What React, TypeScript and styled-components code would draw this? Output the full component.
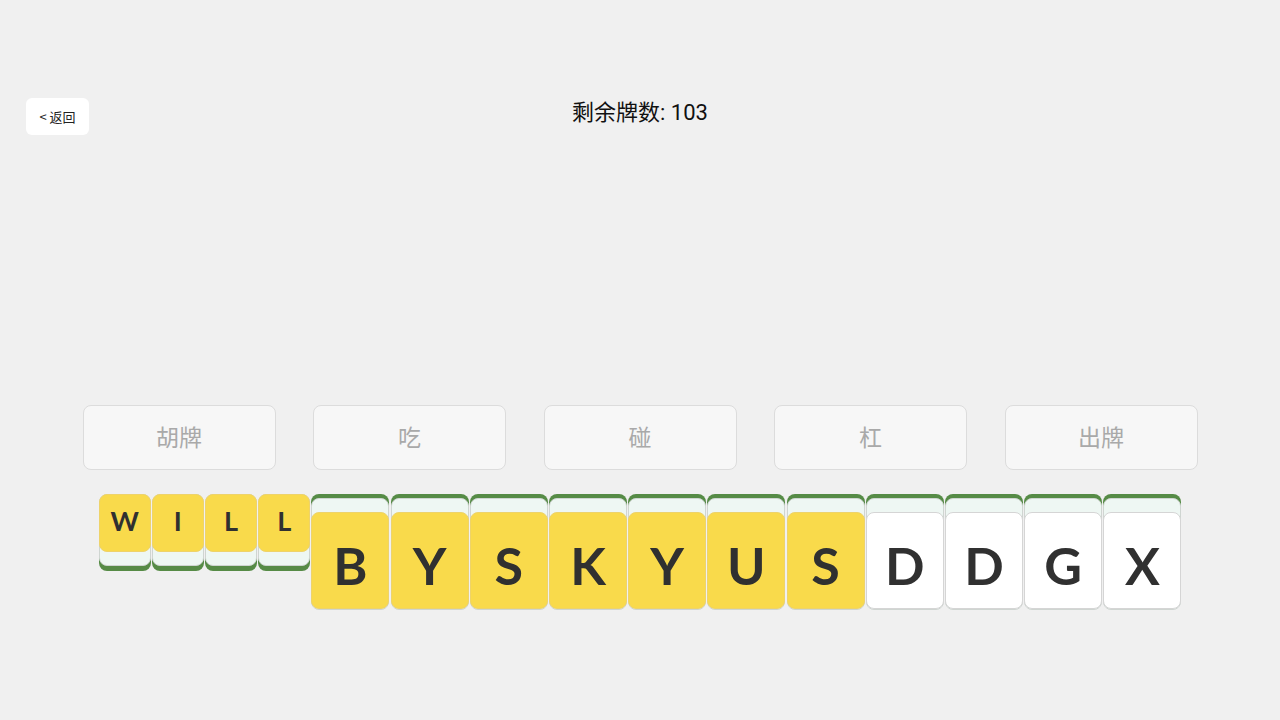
import React from "react";
import styled, { createGlobalStyle } from "styled-components";

const GlobalStyle = createGlobalStyle`
  html, body {
    margin: 0;
    padding: 0;
    background: #f0f0f0;
    font-family: "Noto Sans CJK SC", "Noto Sans", sans-serif;
  }
`;

type TileSize = "big" | "small";
type TileColor = "yellow" | "white";

const Page = styled.div`
  width: 1280px;
  height: 720px;
  display: flex;
  flex-direction: column;
  align-items: center;
  box-sizing: border-box;
  padding-top: 98px;
`;

const Header = styled.div`
  width: 100%;
  display: grid;
  grid-template-columns: 1fr auto 1fr;
  align-items: start;
  padding: 0 26px;
  box-sizing: border-box;
`;

const BackButton = styled.button`
  justify-self: start;
  width: 63px;
  height: 37px;
  border: none;
  border-radius: 6px;
  background: #ffffff;
  color: #222;
  font-family: "Noto Sans CJK SC", sans-serif;
  font-size: 13px;
  padding: 0;
  cursor: pointer;
`;

const Title = styled.div`
  font-family: Roboto, "Noto Sans CJK SC", sans-serif;
  font-size: 22px;
  line-height: 30px;
  color: #111;
`;

const Actions = styled.div`
  margin-top: 270px;
  display: flex;
  gap: 37.5px;
`;

const ActionButton = styled.button`
  width: 193px;
  height: 65px;
  border: 1px solid #dcdcdc;
  border-radius: 8px;
  background: #f7f7f7;
  color: #a9a9a9;
  font-family: "Noto Sans CJK SC", sans-serif;
  font-size: 23px;
  padding: 0 0 4px;
  cursor: pointer;
`;

const Hand = styled.div`
  margin-top: 24px;
  display: flex;
  align-items: flex-start;
  gap: 1.2px;
`;

const Tile = styled.div<{ $size: TileSize }>`
  width: ${(p) => (p.$size === "big" ? "78px" : "52px")};
  box-sizing: border-box;
  display: flex;
  flex-direction: column;
  background: #eef7f3;
  border: 1px solid #cfd5d1;
  border-radius: 8px;
  ${(p) =>
    p.$size === "big"
      ? `margin-top: 4px; padding-top: 14px; box-shadow: 0 -4px 0 #568b46;`
      : `padding-bottom: 13px; box-shadow: 0 5px 0 #568b46;`}
`;

const Face = styled.div<{ $size: TileSize; $color: TileColor }>`
  height: ${(p) => (p.$size === "big" ? "97px" : "58px")};
  margin: -1px -1px 0;
  box-sizing: border-box;
  border-radius: 8px;
  background: ${(p) => (p.$color === "yellow" ? "#f9da4b" : "#ffffff")};
  border: 1px solid ${(p) => (p.$color === "yellow" ? "#eed36a" : "#d5d5d5")};
  display: flex;
  align-items: center;
  justify-content: center;
  padding-top: ${(p) => (p.$size === "big" ? "8px" : "0")};
  padding-bottom: ${(p) => (p.$size === "big" ? "0" : "6px")};
  color: #303030;
  font-family: Lato, "Open Sans", sans-serif;
  font-weight: 700;
  font-size: ${(p) => (p.$size === "big" ? "52px" : "27px")};
`;

const exposed = ["W", "I", "L", "L"];
const hand: { letter: string; color: TileColor }[] = [
  { letter: "B", color: "yellow" },
  { letter: "Y", color: "yellow" },
  { letter: "S", color: "yellow" },
  { letter: "K", color: "yellow" },
  { letter: "Y", color: "yellow" },
  { letter: "U", color: "yellow" },
  { letter: "S", color: "yellow" },
  { letter: "D", color: "white" },
  { letter: "D", color: "white" },
  { letter: "G", color: "white" },
  { letter: "X", color: "white" },
];

const actions = ["胡牌", "吃", "碰", "杠", "出牌"];

export default function App() {
  return (
    <Page>
      <GlobalStyle />
      <Header>
        <BackButton>&lt; 返回</BackButton>
        <Title>剩余牌数: 103</Title>
        <div />
      </Header>

      <Actions>
        {actions.map((a) => (
          <ActionButton key={a}>{a}</ActionButton>
        ))}
      </Actions>

      <Hand>
        {exposed.map((l, i) => (
          <Tile key={"e" + i} $size="small">
            <Face $size="small" $color="yellow">
              {l}
            </Face>
          </Tile>
        ))}
        {hand.map((t, i) => (
          <Tile key={"h" + i} $size="big">
            <Face $size="big" $color={t.color}>
              {t.letter}
            </Face>
          </Tile>
        ))}
      </Hand>
    </Page>
  );
}
